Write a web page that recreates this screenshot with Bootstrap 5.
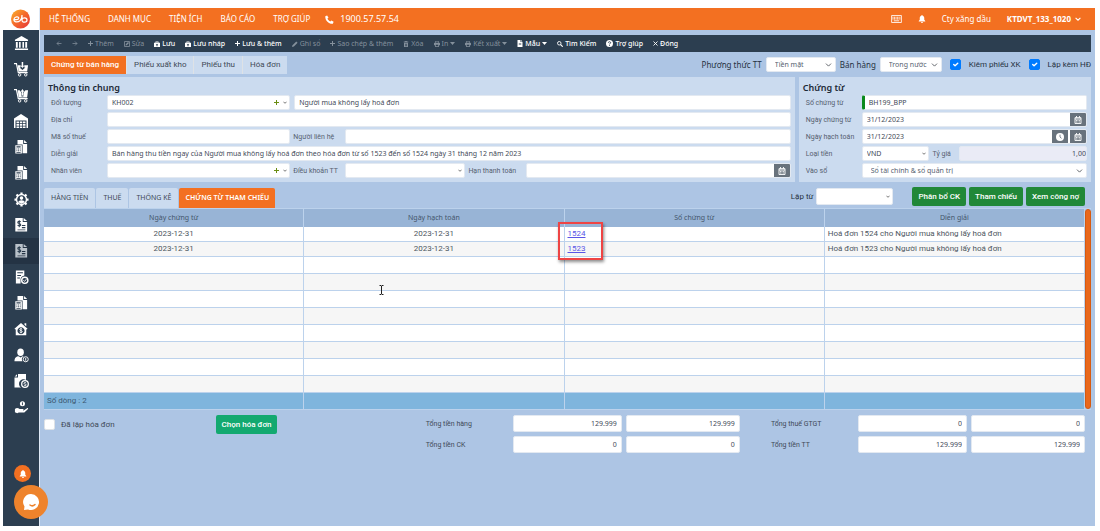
<!DOCTYPE html>
<html lang="vi">
<head>
<meta charset="utf-8">
<meta name="viewport" content="width=device-width, initial-scale=1">
<title>Chứng từ bán hàng</title>
<link href="https://cdn.jsdelivr.net/npm/bootstrap@5.3.0/dist/css/bootstrap.min.css" rel="stylesheet">
<style>
:root{--brand:#f37021;--navy:#2c3e50;--page:#adc5e4;--panel:#cbdbef;--line:#bcd2ec;--narrow:Roboto,"Noto Sans",sans-serif}
body{font-family:"Noto Sans","Open Sans",sans-serif;font-size:7px;line-height:10px;color:#3f4a58;background:#fff;padding:8px 5px 5px 3px}
svg{display:block;flex:none}
button{font:inherit}
.shell{min-height:calc(100vh - 13px)}
.side{width:36px;background:var(--navy)}
.logo-box{height:22px;background:#fff}
.side a{height:26px;color:#fff;display:flex;align-items:center;justify-content:center}
.side a.on{background:#243344;color:#b9c1c9}
.work{background:var(--page);border-left:1px solid #dfe9f6;min-width:0}
.top-nav{height:22px;background:var(--brand);color:#fff;font-size:8px;padding:0 14px 0 9px}
.top-nav a{color:#fff;text-decoration:none}
.menu-links{gap:18px}
.phone{font-size:9px;gap:6px;margin-left:-3px}
.content-pad{padding:5px 4px 0}
.tools{height:17px;background:var(--navy);padding:0 12px;gap:10px}
.tools button{border:0;background:none;padding:0;color:#fff;display:flex;align-items:center;gap:2px;white-space:nowrap;font-weight:500}
.tools button:disabled{color:#84909c;font-weight:400}
.tabs-row{height:25px}
.doc-tab{font-family:var(--narrow);height:18px;border:0;background:var(--panel);color:#3f4a58;padding:0 7px;font-size:8px;white-space:nowrap}
.doc-tab.on{background:var(--brand);color:#fff;font-weight:500}
.opt{font-size:8px;color:#26323f;white-space:nowrap}
.opt-narrow{font-family:var(--narrow)}
.opt-pay{width:70px}
.opt-sale{width:62px}
.panel{background:var(--panel);padding:4px;min-width:0}
.panel-main{flex:742 1 0}
.panel-doc{flex:284 1 0}
.panel h2{font-size:9px;line-height:14px;font-weight:600;color:#1d2a38;margin:0}
.grid-form{display:grid;row-gap:2px;align-items:center}
.grid-main{grid-template-columns:59px minmax(0,183fr) 55px minmax(0,120fr) 61px minmax(0,264fr)}
.grid-doc{grid-template-columns:59px minmax(0,68fr) 30px minmax(0,128fr)}
.grid-form label{font-family:var(--narrow);padding-left:3px;white-space:nowrap;color:#56616f}
.wide-5{grid-column:span 5}.wide-4{grid-column:span 4}.wide-3{grid-column:span 3}
.box-in{height:15px;display:flex;background:#fff;border:1px solid #e3e9f1;border-radius:2px;overflow:hidden;min-width:0;align-items:stretch}
.box-in input{border:0;outline:0;background:none;flex:1;min-width:0;width:100%;padding:0 4px;font-size:7px;color:#3f4a58}
.box-in button{border:0;background:none;padding:0 2px;color:#444;display:flex;align-items:center}
.box-in button.dk{background:#68727c;color:#fff;width:16px;justify-content:center;padding:0}
.box-in button.dk + button.dk{margin-left:2px}
.box-in.must{border-left:3px solid #0b8a1d}
.box-in.tall{height:17px}
.box-in.rate-box{background:#eaebf6}
.plus-green{color:#6b8e13}
.pick{appearance:none;height:15px;border:1px solid #e3e9f1;border-radius:2px;background-color:#fff;color:#56616f;font-size:7px;line-height:10px;padding:0 14px 0 8px;background-position:right 3px center;background-size:7px 6px}
.chk{width:11px;height:11px;margin:0;border-radius:2px}
.chk:checked{background-color:#007bff;border-color:#007bff}
.sub-row{height:26px}
.tab-gap{gap:1px}
.grid-tab{height:20px;border:0;background:var(--panel);color:#3f4a58;padding:0 7px;font-size:7px;white-space:nowrap;border-radius:2px 2px 0 0}
.grid-tab.on{background:var(--brand);color:#fff;font-weight:600;padding:0 6px}
.acts{gap:3px;padding:0 6px 2px 0}
.from-box{width:77px;margin-right:16px}
.act{font-family:var(--narrow);border:0;border-radius:2px;background:#218838;color:#fff;height:19px;font-size:8px;padding:0 6px;font-weight:500;white-space:nowrap}
.act.mint{background:#13a970}
.table-frame{border-top:1px solid var(--line);border-bottom:1px solid var(--line)}
.c-even{width:25%}
.ref-table{width:100%;table-layout:fixed;border-collapse:separate;border-spacing:0;color:#4d5661}
.ref-table th{height:18px;background:#98b4d6;font-weight:400;text-align:center;padding:0;border-right:1px solid var(--line);color:#44566c}
.ref-table td{height:15px;background:#fff;border-right:1px solid var(--line);border-bottom:1px solid var(--line);padding:0 3px;font-family:var(--narrow);font-size:8px}
.ref-table tbody tr:nth-child(even) td{background:#f6f6f6}
.ref-table tr.blank td{height:17px}
.ref-table tfoot td{height:16px;background:#7fb5dd;border-bottom:0;color:#3c5870}
.ref-table a{color:#5a55e6}
.thumb{width:6px;background:#e9681c;border:1px solid #d65a10;border-radius:3px}
.mark-box{position:absolute;left:-7px;top:-5px;width:45px;height:38px;border:2px solid #ee4444;box-shadow:1px 2px 3px rgba(0,0,0,.45);pointer-events:none}
.caret-pos{position:absolute;left:32%;top:76px}
.foot-row{padding:5px 6px 0 0}
.foot-left{flex:0 0 36%}
.foot-left .act{margin-left:101px}
.issued{height:19px;gap:6px;font-family:var(--narrow);font-size:8px}
.sums{gap:31px;padding-left:7px}
.totals{display:grid;grid-template-columns:83px minmax(0,109fr) minmax(0,114fr);gap:4px;align-items:center}
.totals label{font-family:var(--narrow)}
.totals .box-in input{text-align:right}
.fab{position:absolute;border:0;border-radius:50%;color:#fff;padding:0;display:flex;align-items:center;justify-content:center}
.fab-bell{left:11px;bottom:44px;width:17px;height:17px;background:var(--brand)}
.fab-chat{left:11px;bottom:7px;width:34px;height:34px;background:#ee832c}
</style>
</head>
<body>
<svg width="0" height="0" class="position-absolute" aria-hidden="true">
<defs>
<symbol id="i-bank" viewBox="0 0 16 16"><path fill="currentColor" d="M8 0 15 4v1.400H1V4zM2 6.500h2v6H2zM5.400 6.500h1.700v6H5.400zM9 6.500h1.700v6H9zM12 6.500h2v6h-2zM1 13.300h14V15H1z"/></symbol>
<symbol id="i-cartin" viewBox="0 0 16 16"><path fill="none" stroke="currentColor" stroke-width="1.300" d="M0 1.700h2.600l2 9.600h10"/><path fill="currentColor" d="M4 3.500h3v2.300H5.800L9 8.500l3.200-2.700H11V3.500h4L14 10H5z"/><path stroke="currentColor" stroke-width="1.600" d="M9 0v5"/><path fill="currentColor" d="m7 4 2 2.500L11 4z"/><circle cx="6" cy="13.700" r="1.300" fill="none" stroke="currentColor"/><circle cx="12.500" cy="13.700" r="1.300" fill="none" stroke="currentColor"/></symbol>
<symbol id="i-cartout" viewBox="0 0 16 16"><path fill="none" stroke="currentColor" stroke-width="1.300" d="M0 1.700h2.600l2 9.600h10"/><path fill="currentColor" d="M4 2.500h2L8 5v4h2V5l2.200-2.500H15L14 10H5z"/><path fill="currentColor" d="M8.400 8V4H7l2-3 2 3H9.600v4z"/><circle cx="6" cy="13.700" r="1.300" fill="none" stroke="currentColor"/><circle cx="12.500" cy="13.700" r="1.300" fill="none" stroke="currentColor"/></symbol>
<symbol id="i-store" viewBox="0 0 16 16"><path fill="currentColor" fill-rule="evenodd" d="M8 1 15 5.500V15h-1.500V7.500h-11V15H1V5.500z"/><path fill="currentColor" d="M3.500 8.500h2.500v1.800H3.500zM6.800 8.500h2.500v1.800H6.800zM10 8.500h2.500v1.800H10zM3.500 11h2.500v1.700H3.500zM6.800 11h2.500v1.700H6.800zM10 11h2.500v1.700H10zM3.500 13.400h2.500V15H3.500zM6.800 13.400h2.500V15H6.800zM10 13.400h2.500V15H10z"/></symbol>
<symbol id="i-calc" viewBox="0 0 16 16"><path fill="currentColor" d="M4 0h6.500v4.500H15V15H9.800V5H4zM11.500 0 15 3.500h-3.500z"/><path fill="currentColor" fill-rule="evenodd" d="M1.500 6H9v9.500H1.500zm1.300 1.200v1.300h4.800V7.200zm0 2.500v1.100h1v-1.100zm1.900 0v1.100h1v-1.100zm1.900 0v1.100h1v-1.100zm-3.800 2v1.100h1v-1.100zm1.900 0v1.100h1v-1.100zm1.900 0v1.100h1v-1.100zm-3.800 2v.8h4.800v-.8z"/></symbol>
<symbol id="i-gear" viewBox="0 0 16 16"><circle cx="8" cy="8" r="5.300" fill="none" stroke="currentColor" stroke-width="1.500"/><path stroke="currentColor" stroke-width="2.400" d="M8 .5v2M8 13.500v2M.5 8h2M13.500 8h2M2.700 2.700l1.500 1.500M11.800 11.800l1.500 1.500M13.300 2.700l-1.500 1.500M4.200 11.800l-1.500 1.500"/><circle cx="8" cy="6.500" r="1.900" fill="currentColor"/><path fill="currentColor" d="M4.500 11c0-3 7-3 7 0L8 12.500z"/></symbol>
<symbol id="i-bill" viewBox="0 0 16 16"><path fill="currentColor" fill-rule="evenodd" d="M1.500 0H10v4.500h5V15.500H1.500zM9 8v1.200H13V8zm0 2.400v1.200H13v-1.200zM4 13v1h9v-1z"/><path fill="currentColor" d="m11 0 4 3.500h-4z"/><path fill="none" stroke="#2c3e50" stroke-width="1.200" d="M7.500 4.500c-.5-1.200-3.200-1.100-3.200.5 0 1.500 3.400 1.100 3.400 2.700 0 1.700-2.900 1.700-3.500.4M6 2.500v8"/></symbol>
<symbol id="i-cert" viewBox="0 0 16 16"><path fill="currentColor" fill-rule="evenodd" d="M2 1h9v5.500A5 5 0 0 0 7 12v3H2zm1.500 2v1h6V3zm0 2.800v1h4v-1zM3.500 8.500v1h2.800v-1z"/><circle cx="11.500" cy="11.500" r="3.300" fill="none" stroke="currentColor" stroke-width="1.500"/><path fill="none" stroke="currentColor" d="m10 11.500 1.200 1.200 2-2.400"/></symbol>
<symbol id="i-house" viewBox="0 0 16 16"><path fill="currentColor" fill-rule="evenodd" d="m8 1 7.500 6.700-1 1L14 8.300V15H2V8.300l-.5.400-1-1zm0 5a4 4 0 1 0 .01 0"/><path fill="currentColor" d="M12 1.500h2v3.300l-2-1.700z"/><path fill="none" stroke="currentColor" d="M9.400 8.300c-.6-1-2.900-.8-2.900.4 0 1.400 3 .9 3 2.300 0 1.300-2.500 1.400-3.100.3M8 7v6"/></symbol>
<symbol id="i-person" viewBox="0 0 16 16"><ellipse cx="7" cy="4.500" rx="3.500" ry="4" fill="currentColor"/><path fill="currentColor" d="M.5 14c0-4 2-5 4.500-5.300L7 10l2-1.300 1.500.4A3.500 3.500 0 0 0 9 14z"/><circle cx="12.500" cy="12" r="2.700" fill="none" stroke="currentColor"/><path stroke="currentColor" d="M12.500 10.500v3"/></symbol>
<symbol id="i-docusd" viewBox="0 0 16 16"><path fill="currentColor" d="M5 1h8v6A4.500 4.500 0 0 0 8 14.500H1.500V4.500H5zM4 1.200v2.300H1.700z"/><circle cx="12" cy="11" r="3.300" fill="none" stroke="currentColor" stroke-width="1.300"/><path fill="none" stroke="currentColor" stroke-width=".9" d="M13.200 10c-.5-.8-2.300-.6-2.300.3 0 1 2.400.6 2.400 1.600s-2 1-2.500.2"/></symbol>
<symbol id="i-hand" viewBox="0 0 16 16"><circle cx="9" cy="4" r="2.700" fill="currentColor"/><path stroke="#2c3e50" d="M9 2.500v3"/><path fill="currentColor" d="M1 9.500c2-1.500 3.500-.8 5 .2h3.500c1 0 1 1.300 0 1.400H7h3.200L14 8.700c1-.4 1.400.5.700 1.200L11 13.200H5L3.500 14 1 13z"/></symbol>
<symbol id="i-bell" viewBox="0 0 16 16"><path fill="currentColor" d="M8 0a1.200 1.200 0 0 0-1.200 1.300C4.500 2 3.500 3.800 3.500 6v3.500L1.500 12v1h13v-1l-2-2.500V6c0-2.200-1-4-3.300-4.700A1.200 1.200 0 0 0 8 0M6 14a2 2 0 0 0 4 0z"/></symbol>
<symbol id="i-phone" viewBox="0 0 16 16"><path fill="currentColor" d="M.5 2 3.800.7l2.400 4-1.900 1.700c1 2.200 2.800 4 5.300 5.300l1.700-1.900 4 2.400L14 15.500C6.500 16 0 9.500.5 2"/></symbol>
<symbol id="i-keys" viewBox="0 0 16 12"><path fill="none" stroke="currentColor" stroke-width="1.300" d="M.7.700h14.600v10.600H.7z"/><path stroke="currentColor" stroke-width="1.600" stroke-dasharray="1.500 .8" d="M2 3.300h12M2 5.800h12"/><path stroke="currentColor" stroke-width="1.300" d="M4 8.700h8"/></symbol>
<symbol id="i-down" viewBox="0 0 10 6"><path fill="none" stroke="currentColor" stroke-width="1.800" d="m1 1 4 4 4-4"/></symbol>
<symbol id="i-tri" viewBox="0 0 10 6"><path fill="currentColor" d="M0 0h10L5 6z"/></symbol>
<symbol id="i-left" viewBox="0 0 12 10"><path fill="none" stroke="currentColor" stroke-width="1.500" d="M11 5H2m4-4L2 5l4 4"/></symbol>
<symbol id="i-right" viewBox="0 0 12 10"><path fill="none" stroke="currentColor" stroke-width="1.500" d="M1 5h9M6 1l4 4-4 4"/></symbol>
<symbol id="i-plus" viewBox="0 0 10 10"><path stroke="currentColor" stroke-width="2" d="M5 0v10M0 5h10"/></symbol>
<symbol id="i-edit" viewBox="0 0 12 12"><path fill="none" stroke="currentColor" stroke-width="1.600" d="M1 1h10v10H1z"/><path fill="currentColor" d="m3 9 .5-2.500L8 2l2 2-4.500 4.500z"/></symbol>
<symbol id="i-save" viewBox="0 0 12 12"><path fill="currentColor" fill-rule="evenodd" d="M0 3.500h3V1h6v2.500h3V12H0zm4.500-1v1h3v-1zM6 5.500 3.500 8H5v2.500h2V8h1.500z"/></symbol>
<symbol id="i-pen" viewBox="0 0 12 12"><path fill="currentColor" d="m0 12 1-3.700L8.500.8l2.700 2.700L3.700 11z"/></symbol>
<symbol id="i-trash" viewBox="0 0 12 12"><path fill="currentColor" fill-rule="evenodd" d="M1.500 1H4l.5-1h3L8 1h2.500v2h-9zM2 3.800h8V12H2zm2 1.700v5h.8v-5zm1.700 0v5h.8v-5zm1.600 0v5h.8v-5z"/></symbol>
<symbol id="i-print" viewBox="0 0 12 12"><path fill="currentColor" fill-rule="evenodd" d="M2.500 0h7v3.500H11l1 1v4H9.800V12H2.200V8.500H0v-4l1-1h1.500zm1.200 1.200v2.500h4.600V1.200zm0 6.300v3.200h4.600V7.500z"/></symbol>
<symbol id="i-file" viewBox="0 0 12 14"><path fill="currentColor" fill-rule="evenodd" d="M1 0h6v4h4v10H1zm2.500 6v1h5V6zm0 2.500v1h5v-1zM8 0l3 3H8z"/></symbol>
<symbol id="i-find" viewBox="0 0 12 12"><circle cx="4.500" cy="4.500" r="3.500" fill="none" stroke="currentColor" stroke-width="1.800"/><path stroke="currentColor" stroke-width="2.200" d="m7 7 4.500 4.500"/></symbol>
<symbol id="i-help" viewBox="0 0 12 12"><circle cx="6" cy="6" r="6" fill="currentColor"/><path fill="none" stroke="#2c3e50" stroke-width="1.500" d="M4 4.700c0-2.500 4-2.200 4 0 0 1.300-2 1.300-2 2.800M6 8.500v1.500"/></symbol>
<symbol id="i-x" viewBox="0 0 10 10"><path stroke="currentColor" stroke-width="1.800" d="m1 1 8 8M9 1 1 9"/></symbol>
<symbol id="i-cal" viewBox="0 0 12 12"><path fill="none" stroke="currentColor" stroke-width="1.400" d="M1.500 2.500h9v8.800h-9zM1.500 4.500h9M3.800 0v2.500M8.200 0v2.500"/><path stroke="currentColor" stroke-dasharray="1.500 .7" stroke-width="1.300" d="M3 6.700h6.500M3 9h6.500"/></symbol>
<symbol id="i-clock" viewBox="0 0 12 12"><circle cx="6" cy="6" r="6" fill="currentColor"/><path fill="none" stroke="#68727c" stroke-width="1.300" d="M6 2.500V6l2.300 2"/></symbol>
</defs>
</svg>

<div class="shell d-flex position-relative">
  <nav class="side flex-shrink-0" aria-label="Phân hệ">
    <div class="logo-box d-flex align-items-center justify-content-center">
      <svg width="20" height="20" viewBox="0 0 20 20"><defs><linearGradient id="lg" x1="0" y1="0" x2="1" y2="1"><stop offset="0" stop-color="#fbb62c"/><stop offset=".5" stop-color="#f4672b"/><stop offset="1" stop-color="#e5343a"/></linearGradient></defs><circle cx="9.500" cy="10" r="9.500" fill="url(#lg)"/><path fill="none" stroke="#fff" stroke-width="1.200" stroke-linecap="round" d="M3 10.500c3 .4 5 0 4.800-1.600-.3-1.600-4.200-1.500-4.800 1.300-.5 3 3.500 3.600 6 1.500 1.500-1.300 2-3 2-5.700v5c0 3 5 2.800 5 0 0-2.900-4.500-2.700-5-.5"/></svg>
    </div>
    <a href="#" aria-label="Ngân hàng"><svg width="15" height="15"><use href="#i-bank"/></svg></a>
    <a href="#" aria-label="Mua hàng"><svg width="15" height="15"><use href="#i-cartin"/></svg></a>
    <a href="#" aria-label="Bán hàng"><svg width="15" height="15"><use href="#i-cartout"/></svg></a>
    <a href="#" aria-label="Kho"><svg width="16" height="16"><use href="#i-store"/></svg></a>
    <a href="#" aria-label="Công cụ dụng cụ"><svg width="14" height="14"><use href="#i-calc"/></svg></a>
    <a href="#" aria-label="Tài sản cố định"><svg width="14" height="14"><use href="#i-calc"/></svg></a>
    <a href="#" aria-label="Tiền lương"><svg width="15" height="15"><use href="#i-gear"/></svg></a>
    <a href="#" aria-label="Hóa đơn"><svg width="14" height="14"><use href="#i-bill"/></svg></a>
    <a href="#" class="on" aria-label="Hóa đơn điện tử"><svg width="14" height="14"><use href="#i-bill"/></svg></a>
    <a href="#" aria-label="Hợp đồng"><svg width="15" height="16"><use href="#i-cert"/></svg></a>
    <a href="#" aria-label="Giá thành"><svg width="14" height="14"><use href="#i-calc"/></svg></a>
    <a href="#" aria-label="Thuế"><svg width="14" height="14"><use href="#i-house"/></svg></a>
    <a href="#" aria-label="Nhân viên"><svg width="15" height="15"><use href="#i-person"/></svg></a>
    <a href="#" aria-label="Tổng hợp"><svg width="16" height="16"><use href="#i-docusd"/></svg></a>
    <a href="#" aria-label="Ngân sách"><svg width="15" height="15"><use href="#i-hand"/></svg></a>
  </nav>

  <main class="work flex-grow-1">
    <header class="top-nav d-flex align-items-center">
      <nav class="menu-links d-flex align-items-center">
        <a href="#">HỆ THỐNG</a><a href="#">DANH MỤC</a><a href="#">TIỆN ÍCH</a><a href="#">BÁO CÁO</a><a href="#">TRỢ GIÚP</a>
        <a href="#" class="phone d-flex align-items-center"><svg width="9" height="9"><use href="#i-phone"/></svg>1900.57.57.54</a>
      </nav>
      <div class="ms-auto d-flex align-items-center">
        <svg width="11" height="8" class="me-3"><use href="#i-keys"/></svg>
        <svg width="8" height="8" class="me-3"><use href="#i-bell"/></svg>
        <a href="#" class="me-3">Cty xăng dầu</a>
        <a href="#" class="d-flex align-items-center gap-1 fw-bold">KTDVT_133_1020 <svg width="6" height="4"><use href="#i-down"/></svg></a>
      </div>
    </header>

    <div class="content-pad">
      <div class="tools d-flex align-items-center" role="toolbar" aria-label="Thao tác">
        <button disabled aria-label="Trước"><svg width="6" height="5"><use href="#i-left"/></svg></button>
        <button disabled aria-label="Sau"><svg width="6" height="5"><use href="#i-right"/></svg></button>
        <button disabled><svg width="5" height="5"><use href="#i-plus"/></svg>Thêm</button>
        <button disabled><svg width="6" height="6"><use href="#i-edit"/></svg>Sửa</button>
        <button><svg width="6" height="6"><use href="#i-save"/></svg>Lưu</button>
        <button><svg width="6" height="6"><use href="#i-save"/></svg>Lưu nháp</button>
        <button><svg width="5" height="5"><use href="#i-plus"/></svg>Lưu &amp; thêm</button>
        <button disabled><svg width="6" height="6"><use href="#i-pen"/></svg>Ghi sổ</button>
        <button disabled><svg width="5" height="5"><use href="#i-plus"/></svg>Sao chép &amp; thêm</button>
        <button disabled><svg width="6" height="6"><use href="#i-trash"/></svg>Xóa</button>
        <button disabled><svg width="6" height="6"><use href="#i-print"/></svg>In <svg width="5" height="3"><use href="#i-tri"/></svg></button>
        <button disabled><svg width="6" height="6"><use href="#i-print"/></svg>Kết xuất <svg width="5" height="3"><use href="#i-tri"/></svg></button>
        <button><svg width="6" height="7"><use href="#i-file"/></svg>Mẫu <svg width="5" height="3"><use href="#i-tri"/></svg></button>
        <button><svg width="6" height="6"><use href="#i-find"/></svg>Tìm Kiếm</button>
        <button><svg width="7" height="7"><use href="#i-help"/></svg>Trợ giúp</button>
        <button><svg width="5" height="5"><use href="#i-x"/></svg>Đóng</button>
      </div>

      <div class="tabs-row d-flex align-items-center">
        <div class="d-flex" role="tablist">
          <button class="doc-tab on" role="tab">Chứng từ bán hàng</button>
          <button class="doc-tab border-start" role="tab">Phiếu xuất kho</button>
          <button class="doc-tab border-start" role="tab">Phiếu thu</button>
          <button class="doc-tab border-start" role="tab">Hóa đơn</button>
        </div>
        <div class="opt ms-auto d-flex align-items-center">
          <label for="pay" class="me-1">Phương thức TT</label>
          <select id="pay" class="pick form-select opt-pay"><option>Tiền mặt</option></select>
          <label for="sale" class="mx-1">Bán hàng</label>
          <select id="sale" class="pick form-select opt-sale"><option>Trong nước</option></select>
          <input type="checkbox" id="xk" class="chk form-check-input mx-2" checked><label for="xk" class="opt-narrow">Kiêm phiếu XK</label>
          <input type="checkbox" id="hd" class="chk form-check-input mx-2" checked><label for="hd" class="opt-narrow">Lập kèm HĐ</label>
        </div>
      </div>

      <div class="d-flex gap-1">
        <section class="panel panel-main">
          <h2>Thông tin chung</h2>
          <div class="grid-form grid-main">
            <label for="obj">Đối tượng</label>
            <div class="box-in"><input id="obj" value="KH002"><button aria-label="Thêm đối tượng"><svg width="5" height="5" class="plus-green"><use href="#i-plus"/></svg></button><button aria-label="Mở"><svg width="4" height="3"><use href="#i-down"/></svg></button></div>
            <div class="box-in wide-4 ms-1"><input aria-label="Tên đối tượng" value="Người mua không lấy hoá đơn"></div>
            <label for="addr">Địa chỉ</label><div class="box-in wide-5"><input id="addr"></div>
            <label for="tax">Mã số thuế</label><div class="box-in"><input id="tax"></div>
            <label for="contact">Người liên hệ</label><div class="box-in wide-3"><input id="contact"></div>
            <label for="desc">Diễn giải</label><div class="box-in wide-5"><input id="desc" value="Bán hàng thu tiền ngay của Người mua không lấy hoá đơn theo hóa đơn từ số 1523 đến số 1524 ngày 31 tháng 12 năm 2023"></div>
            <label for="emp">Nhân viên</label>
            <div class="box-in"><input id="emp"><button aria-label="Thêm nhân viên"><svg width="5" height="5" class="plus-green"><use href="#i-plus"/></svg></button><button aria-label="Mở"><svg width="4" height="3"><use href="#i-down"/></svg></button></div>
            <label for="term">Điều khoản TT</label>
            <div class="box-in"><input id="term"><button aria-label="Mở"><svg width="4" height="3"><use href="#i-down"/></svg></button></div>
            <label for="due">Hạn thanh toán</label>
            <div class="box-in"><input id="due"><button class="dk" aria-label="Chọn ngày"><svg width="8" height="8"><use href="#i-cal"/></svg></button></div>
          </div>
        </section>
        <section class="panel panel-doc">
          <h2>Chứng từ</h2>
          <div class="grid-form grid-doc">
            <label for="no">Số chứng từ</label><div class="box-in must wide-3"><input id="no" value="BH199_BPP"></div>
            <label for="d1">Ngày chứng từ</label><div class="box-in wide-3"><input id="d1" value="31/12/2023"><button class="dk" aria-label="Chọn ngày"><svg width="8" height="8"><use href="#i-cal"/></svg></button></div>
            <label for="d2">Ngày hạch toán</label><div class="box-in wide-3"><input id="d2" value="31/12/2023"><button class="dk" aria-label="Chọn giờ"><svg width="8" height="8"><use href="#i-clock"/></svg></button><button class="dk" aria-label="Chọn ngày"><svg width="8" height="8"><use href="#i-cal"/></svg></button></div>
            <label for="cur">Loại tiền</label><div class="box-in"><input id="cur" value="VND"><button aria-label="Mở"><svg width="4" height="3"><use href="#i-down"/></svg></button></div>
            <label for="rate">Tỷ giá</label><div class="box-in rate-box"><input id="rate" class="text-end pe-0" value="1,00" readonly></div>
            <label for="book">Vào sổ</label><select id="book" class="pick form-select wide-3"><option>Sổ tài chính &amp; sổ quản trị</option></select>
          </div>
        </section>
      </div>

      <div class="sub-row d-flex align-items-end">
        <div class="d-flex tab-gap" role="tablist">
          <button class="grid-tab" role="tab">HÀNG TIỀN</button>
          <button class="grid-tab" role="tab">THUẾ</button>
          <button class="grid-tab" role="tab">THỐNG KÊ</button>
          <button class="grid-tab on" role="tab">CHỨNG TỪ THAM CHIẾU</button>
        </div>
        <div class="opt opt-narrow ms-auto d-flex align-items-center acts">
          <label for="from">Lập từ</label>
          <div class="box-in tall from-box"><input id="from"><button aria-label="Mở"><svg width="4" height="3"><use href="#i-down"/></svg></button></div>
          <button class="act">Phân bổ CK</button>
          <button class="act">Tham chiếu</button>
          <button class="act">Xem công nợ</button>
        </div>
      </div>

      <div class="d-flex position-relative table-frame">
        <table class="ref-table">
          <colgroup><col class="c-even"><col class="c-even"><col class="c-even"><col></colgroup>
          <thead><tr><th>Ngày chứng từ</th><th>Ngày hạch toán</th><th>Số chứng từ</th><th>Diễn giải</th></tr></thead>
          <tbody>
            <tr><td class="text-center">2023-12-31</td><td class="text-center">2023-12-31</td><td class="position-relative"><a href="#">1524</a><span class="mark-box"></span></td><td>Hoá đơn 1524 cho Người mua không lấy hoá đơn</td></tr>
            <tr><td class="text-center">2023-12-31</td><td class="text-center">2023-12-31</td><td><a href="#">1523</a></td><td>Hoá đơn 1523 cho Người mua không lấy hoá đơn</td></tr>
            <tr class="blank"><td></td><td></td><td></td><td></td></tr>
            <tr class="blank"><td></td><td></td><td></td><td></td></tr>
            <tr class="blank"><td></td><td></td><td></td><td></td></tr>
            <tr class="blank"><td></td><td></td><td></td><td></td></tr>
            <tr class="blank"><td></td><td></td><td></td><td></td></tr>
            <tr class="blank"><td></td><td></td><td></td><td></td></tr>
            <tr class="blank"><td></td><td></td><td></td><td></td></tr>
            <tr class="blank"><td></td><td></td><td></td><td></td></tr>
          </tbody>
          <tfoot><tr><td>Số dòng : 2</td><td></td><td></td><td></td></tr></tfoot>
        </table>
        <div class="thumb flex-shrink-0"></div>
        <svg class="caret-pos" width="5" height="10" viewBox="0 0 5 10"><path fill="none" stroke="#222" d="M.5.500h1.500l.5.500.5-.5h1.500M2.500 1v8M.5 9.500h1.500l.5-.5.5.5h1.500"/></svg>
      </div>

      <div class="d-flex foot-row">
        <div class="foot-left d-flex">
          <div class="d-flex align-items-center issued">
            <input type="checkbox" id="issued" class="chk form-check-input"><label for="issued">Đã lập hóa đơn</label>
          </div>
          <button class="act mint">Chọn hóa đơn</button>
        </div>
        <div class="flex-grow-1 d-flex sums">
          <div class="totals flex-fill">
            <label for="t1">Tổng tiền hàng</label><div class="box-in tall"><input id="t1" value="129.999"></div><div class="box-in tall"><input aria-label="Tổng tiền hàng quy đổi" value="129.999"></div>
            <label for="t2">Tổng tiền CK</label><div class="box-in tall"><input id="t2" value="0"></div><div class="box-in tall"><input aria-label="Tổng tiền CK quy đổi" value="0"></div>
          </div>
          <div class="totals flex-fill">
            <label for="t3">Tổng thuế GTGT</label><div class="box-in tall"><input id="t3" value="0"></div><div class="box-in tall"><input aria-label="Tổng thuế GTGT quy đổi" value="0"></div>
            <label for="t4">Tổng tiền TT</label><div class="box-in tall"><input id="t4" value="129.999"></div><div class="box-in tall"><input aria-label="Tổng tiền TT quy đổi" value="129.999"></div>
          </div>
        </div>
      </div>
    </div>
  </main>

  <button class="fab fab-bell" aria-label="Thông báo"><svg width="8" height="8"><use href="#i-bell"/></svg></button>
  <button class="fab fab-chat" aria-label="Trò chuyện"><svg width="18" height="18" viewBox="0 0 18 18"><path fill="#fff" d="M9 1a8 8 0 1 1-3 15.400L2 17l.5-3.500A8 8 0 0 1 9 1"/><path fill="none" stroke="#ee832c" stroke-width="1.500" stroke-linecap="round" d="M8 12c1.500 1.200 3.500 1 5-.5"/></svg></button>
</div>
<script src="https://cdn.jsdelivr.net/npm/bootstrap@5.3.0/dist/js/bootstrap.bundle.min.js"></script>
</body>
</html>
